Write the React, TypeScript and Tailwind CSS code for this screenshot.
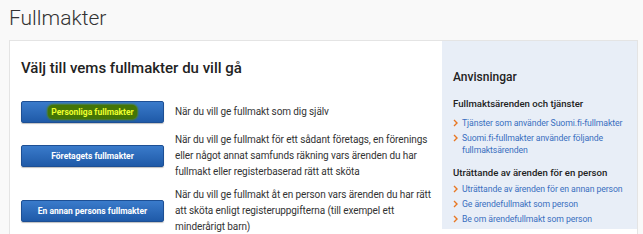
import React from "react";

const font = { fontFamily: "Roboto, 'Open Sans', sans-serif" };

function Btn({ children }: { children: React.ReactNode }) {
  return (
    <div className="w-[143px] h-[22px] shrink-0 flex items-center justify-center rounded-[2px] border border-[#1d4f94] bg-gradient-to-b from-[#3a7bcb] to-[#1f5aa8] text-white text-[8.5px] font-bold shadow-[0_1px_1px_rgba(0,0,0,0.25)]">
      {children}
    </div>
  );
}

function Chevron() {
  return (
    <svg width="5" height="8" viewBox="0 0 5 8" className="shrink-0 mt-[2px]">
      <polyline points="1,1 4,4 1,7" fill="none" stroke="#e87722" strokeWidth="1.4" />
    </svg>
  );
}

function Link({ children }: { children: React.ReactNode }) {
  return (
    <div className="flex items-start gap-[4px] text-[8.7px] tracking-[-0.1px] leading-[12px] text-[#3a6fc0] mb-[3px] whitespace-nowrap">
      <Chevron />
      <span>{children}</span>
    </div>
  );
}

const desc = "ml-[11px] text-[10px] tracking-[-0.1px] leading-[16px] text-[#333] whitespace-nowrap";

export default function App() {
  return (
    <div style={font} className="w-[643px] h-[234px] bg-[#f9f9f9] overflow-hidden text-[#222]">
      <div className="h-[40px] pl-[9px] pt-[5px] text-[21px] leading-[26px] font-light text-[#333]">Fullmakter</div>
      <div className="ml-[9px] w-[629px] h-[200px] bg-white border border-[#e4e4e4] flex items-start overflow-hidden">
        <div className="w-[432px] shrink-0 pl-[11px] pt-[17px]">
          <div className="text-[15px] leading-[20px] font-medium text-[#222]">Välj till vems fullmakter du vill gå</div>
          <div className="mt-[23px] flex flex-col">
            <div className="flex items-center h-[22px]">
              <Btn>
                <span className="bg-[#437506] text-[#eeff2e] rounded-[5px] px-[3px] py-[1px] shadow-[0_0_2px_1px_#4f800e]">Personliga fullmakter</span>
              </Btn>
              <div className={desc}>När du vill ge fullmakt som dig själv</div>
            </div>
            <div className="flex items-center mt-[9px]">
              <Btn>Företagets fullmakter</Btn>
              <div className={desc}>
                När du vill ge fullmakt för ett sådant företags, en förenings
                <br />
                eller något annat samfunds räkning vars ärenden du har
                <br />
                fullmakt eller registerbaserad rätt att sköta
              </div>
            </div>
            <div className="flex items-center mt-[7px]">
              <Btn>En annan persons fullmakter</Btn>
              <div className={desc}>
                När du vill ge fullmakt åt en person vars ärenden du har rätt
                <br />
                att sköta enligt registeruppgifterna (till exempel ett
                <br />
                minderårigt barn)
              </div>
            </div>
          </div>
        </div>
        <div className="w-[195px] h-[188px] shrink-0 bg-[#e8eef7] pl-[11px] pt-[28px]">
          <div className="text-[12px] leading-[16px] font-medium text-[#222]">Anvisningar</div>
          <div className="mt-[12px] text-[9.6px] leading-[14px] font-medium text-[#222] mb-[6px]">Fullmaktsärenden och tjänster</div>
          <Link>Tjänster som använder Suomi.fi-fullmakter</Link>
          <Link>
            Suomi.fi-fullmakter använder följande
            <br />
            fullmaktsärenden
          </Link>
          <div className="mt-[10px] text-[9.6px] leading-[14px] font-medium text-[#222] mb-[3px]">Uträttande av ärenden för en person</div>
          <Link>Uträttande av ärenden för en annan person</Link>
          <Link>Ge ärendefullmakt som person</Link>
          <Link>Be om ärendefullmakt som person</Link>
        </div>
      </div>
    </div>
  );
}
